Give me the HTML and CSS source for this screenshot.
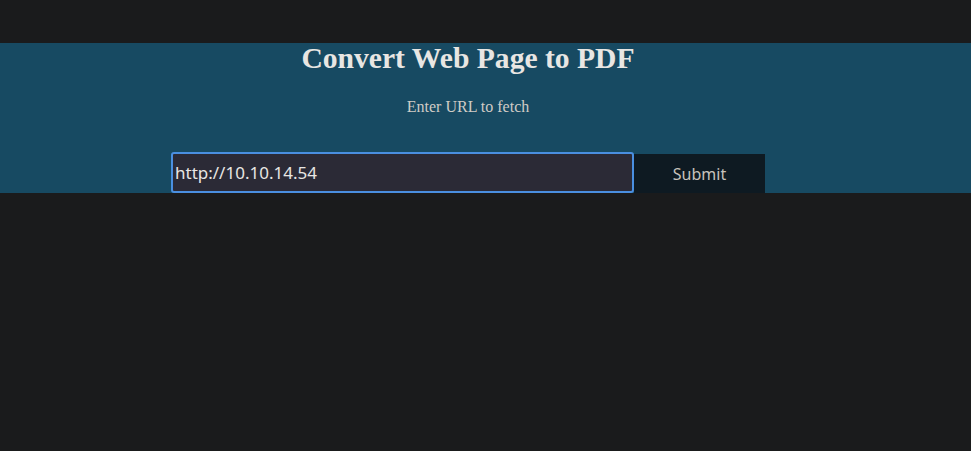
FILE: index.html
```html
<!DOCTYPE html>
<html>
<head>
<meta charset="utf-8">
<link rel="stylesheet" href="styles.css">
</head>
<body>
<div class="banner">
  <div class="inner">
    <h1 class="title">Convert Web Page to PDF</h1>
    <p class="sub">Enter URL to fetch</p>
    <form class="form">
      <input class="url" type="text" value="http://10.10.14.54"><button class="submit" type="button">Submit</button>
    </form>
  </div>
</div>
</body>
</html>
```

FILE: styles.css
```css
html, body {
  margin: 0;
  padding: 0;
  background: #1a1b1c;
}
body {
  padding-top: 43px;
  font-family: "Liberation Serif", "Times New Roman", serif;
  color: #e8e6e3;
}
.banner {
  background: #174a62;
  height: 150px;
  overflow: hidden;
}
.inner {
  width: 936px;
  text-align: center;
}
.title {
  margin: 0;
  padding-top: 0;
  font-size: 29.6px;
  line-height: 30px;
  font-weight: bold;
  color: #e8e6e3;
}
.sub {
  margin: 25px 0 0;
  font-size: 16px;
  line-height: 18px;
  color: #d0ccc6;
}
.form {
  margin-top: 36px;
  display: flex;
  justify-content: center;
  align-items: flex-end;
}
.url {
  box-sizing: border-box;
  width: 463px;
  height: 41px;
  margin: 0;
  padding: 0 2px;
  border: 2px solid #4a8fe0;
  border-radius: 3px;
  background: #2b2a36;
  color: #e8e6e3;
  font-family: "Noto Sans", "Open Sans", sans-serif;
  font-size: 17px;
  outline: none;
}
.submit {
  box-sizing: border-box;
  width: 131px;
  height: 39px;
  margin: 0;
  border: 0;
  background: #0e1a22;
  color: #c8c3bc;
  font-family: "Noto Sans", "Open Sans", sans-serif;
  font-size: 16px;
}
```
